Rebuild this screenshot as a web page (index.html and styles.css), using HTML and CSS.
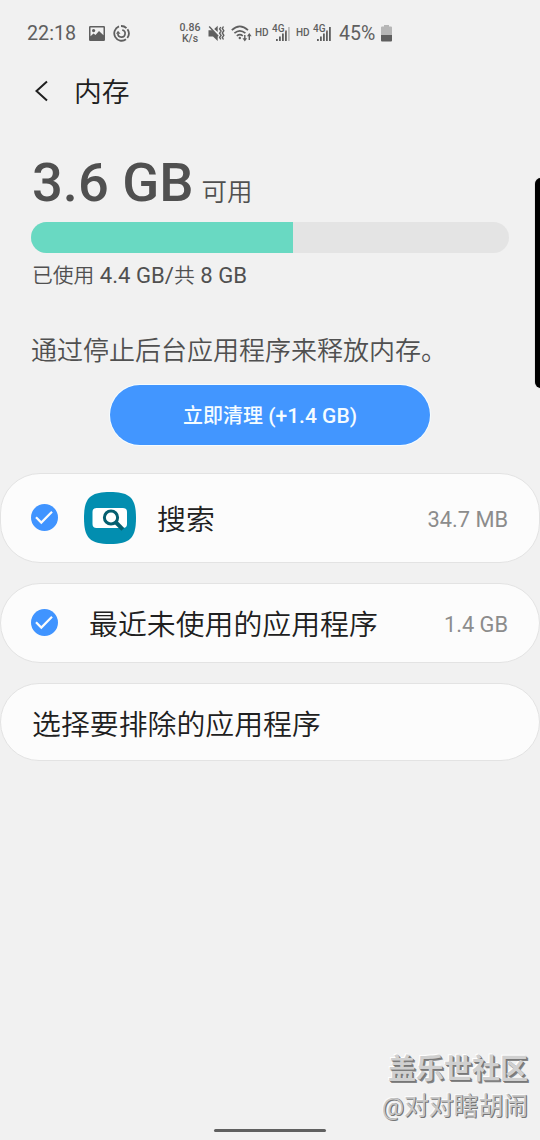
FILE: index.html
```html
<!DOCTYPE html>
<html lang="zh-CN">
<head>
<meta charset="utf-8">
<title>内存</title>
<link rel="stylesheet" href="styles.css">
</head>
<body>
<div class="screen">
  <div class="status">
    <span class="clock">22:18</span>
    <svg class="ic-photo" width="16" height="15" viewBox="0 0 16 15"><path fill="#5f5f5f" fill-rule="evenodd" d="M1.200 0h13.600Q16 0 16 1.200v12.600q0 1.200-1.200 1.200H1.200Q0 15 0 13.800V1.200Q0 0 1.200 0zM1.500 1.500v8.800l3-2.800 2 1.500 3.500-4 4.500 4.300V1.500z"/><circle cx="4.600" cy="4.600" r="1.600" fill="#5f5f5f"/></svg>
    <svg class="ic-swirl" width="17" height="17" viewBox="0 0 17 17" fill="none" stroke="#5f5f5f" stroke-width="1.800"><path d="M6 1.400A7.400 7.400 0 1 0 13 14.300M8 1A7.500 7.500 0 0 1 13.500 3.200M14.500 4.300A7.500 7.500 0 0 1 14.300 13"/><path d="M9.200 5a3.600 3.600 0 1 1-4.300 3.500" stroke-width="1.700"/><path d="M3 8.800l2-3 2.500 3z" fill="#5f5f5f" stroke="none"/></svg>
    <span class="speed"><span>0.86</span><span>K/s</span></span>
    <svg class="ic-mute" width="17" height="17" viewBox="0 0 17 17"><path fill="#5f5f5f" d="M.5 5.300h3.500l5.700 5.500V16l-4.700-4.500H.5zM6.200 4l3.500-3.200V7z"/><path d="M1.200 1.500l9 9.700M12.800 2l-1.200 2 1.500 2-1.500 2.200 1.500 2.200-1.500 2 1.200 2M15.500 1.500l-1.200 2 1.500 2.200-1.500 2.300 1.500 2.300-1.500 2.200 1.200 2" fill="none" stroke="#5f5f5f" stroke-width="1.400"/></svg>
    <svg class="ic-wifi" width="21" height="17" viewBox="0 0 21 17" fill="none" stroke="#5f5f5f" stroke-width="1.700"><path d="M.8 5.200Q8.800-2.400 17 5.200M3.400 8.200q5.400-4.700 11 0M5.800 10.800q3.100-2.400 6 0"/><circle cx="8.800" cy="13" r="1.200" fill="#5f5f5f" stroke="none"/><path d="M13.800 10v5M18.300 15v-5" stroke-width="1.400"/><path d="M11.500 13.300h4.600l-2.300 3.200zM16 11.200h4.600L18.300 8z" fill="#5f5f5f" stroke="none"/></svg>
    <span class="hd hd-a">HD</span>
    <span class="cell cell-a"><svg width="19" height="17" viewBox="0 0 19 17"><path fill="#5f5f5f" d="M4 14h1.800v2H4zM7 11.500h1.800V16H7zM10 8.500h1.800V16H10zM13 5.500h1.800V16H13z"/><path fill="#bcbcbc" d="M16 2h1.800v14H16z"/></svg><b>4G</b></span>
    <span class="hd hd-b">HD</span>
    <span class="cell cell-b"><svg width="19" height="17" viewBox="0 0 19 17"><path fill="#5f5f5f" d="M4 14h1.800v2H4zM7 11.500h1.800V16H7zM10 8.500h1.800V16H10zM13 5.500h1.800V16H13zM16 2h1.800v14H16z"/></svg><b>4G</b></span>
    <span class="percent">45%</span>
    <svg class="ic-battery" width="11" height="17" viewBox="0 0 11 17"><path fill="#b6b6b6" d="M3 0h5v1.500h2q1 0 1 1V10H0V2.500q0-1 1-1h2z"/><path fill="#5f5f5f" d="M0 10h11v5.500q0 1-1 1H1q-1 0-1-1z"/></svg>
  </div>

  <header class="title-bar">
    <svg class="back" width="14" height="22" viewBox="0 0 14 22"><path d="M13 1.500L2.500 11l10.500 9.500" fill="none" stroke="#202020" stroke-width="2"/></svg>
    <h1 class="title">内存</h1>
  </header>

  <section class="summary">
    <div class="free"><span class="amount">3.6 GB</span><span class="free-label">可用</span></div>
    <div class="bar"><div class="bar-used"></div></div>
    <div class="usage">已使用<span class="num"> 4.4 GB/</span>共<span class="num"> 8 GB</span></div>
    <p class="hint">通过停止后台应用程序来释放内存。</p>
  </section>
  <button class="clean">立即清理<span class="gain"> (+1.4 GB)</span></button>

  <div class="cards">
    <div class="card card-app">
      <svg class="check" width="28" height="28" viewBox="0 0 28 28"><circle cx="14.500" cy="13.500" r="13.500" fill="#4094ff"/><path d="M6 13.300l5.300 5.300L22 7.800" fill="none" stroke="#fcfcfc" stroke-width="2.200"/></svg>
      <svg class="app-icon" width="52" height="52" viewBox="0 0 52 52"><path fill="#028eb0" d="M26 0C46 0 52 6 52 26S46 52 26 52 0 46 0 26 6 0 26 0z"/><rect x="8.500" y="16" width="34.500" height="20" rx="4" fill="#fff"/><circle cx="27" cy="25.500" r="6.600" fill="none" stroke="#055f70" stroke-width="3"/><path d="M31.500 30l7.300 7.300" stroke="#055f70" stroke-width="4"/></svg>
      <span class="name">搜索</span><span class="size">34.7 MB</span>
    </div>
    <div class="card card-unused">
      <svg class="check" width="28" height="28" viewBox="0 0 28 28"><circle cx="14.500" cy="13.500" r="13.500" fill="#4094ff"/><path d="M6 13.300l5.300 5.300L22 7.800" fill="none" stroke="#fcfcfc" stroke-width="2.200"/></svg>
      <span class="name">最近未使用的应用程序</span><span class="size">1.4 GB</span>
    </div>
    <div class="card card-exclude"><span class="name">选择要排除的应用程序</span></div>
  </div>

  <footer class="foot">
    <div class="mark-site">盖乐世社区</div>
    <div class="mark-user">@对对瞎胡闹</div>
    <div class="home-pill"></div>
  </footer>
  <div class="edge-handle"></div>
</div>
</body>
</html>
```
FILE: styles.css
```css
* { box-sizing: border-box; }
body { margin: 0; background: #f1f1f1; font-family: Roboto, "Noto Sans CJK SC", sans-serif; color: #202020; }
svg { display: block; flex: none; }
.screen { position: relative; width: 540px; height: 1140px; overflow: hidden; display: flex; flex-direction: column; }
.status { height: 66px; padding-left: 27px; display: flex; align-items: center; color: #5f5f5f; flex: none; white-space: nowrap; }
.clock { width: 62px; font-size: 19.700px; line-height: 24px; padding-top: 1px; }
.ic-swirl { margin-left: 8px; }
.speed { width: 22px; margin-left: 49px; font-size: 10.500px; line-height: 10px; font-weight: 500; display: flex; flex-direction: column; align-items: center; gap: 1px; }
.ic-mute { margin-left: 7px; }
.ic-wifi { margin-left: 6px; }
.hd { width: 14px; font-size: 10px; line-height: 12px; font-weight: 500; }
.hd-a { margin-left: 3px; }
.hd-b { margin-left: 5px; }
.cell { position: relative; width: 19px; height: 17px; margin-left: 3px; }
.cell b { position: absolute; left: 0; top: -2px; font-size: 10px; line-height: 11px; font-weight: 500; text-shadow: 1px 1px 0 #f1f1f1; }
.percent { margin-left: 7px; width: 42px; font-size: 19.500px; line-height: 24px; padding-top: 1px; }
.title-bar { height: 50px; display: flex; align-items: center; padding-left: 34px; flex: none; }
.title { margin: 0 0 2px 26px; font-size: 27.800px; line-height: 40px; font-weight: 350; font-family: "Noto Sans CJK SC", sans-serif; }
.summary { padding: 35px 31px 0; color: #505050; }
.free { height: 71px; display: flex; align-items: baseline; line-height: 64px; white-space: nowrap; padding-left: 1px; }
.amount { font-size: 54.300px; font-weight: 500; }
.free-label { font-size: 25.500px; margin-left: 8px; font-weight: 350; }
.bar { height: 31px; border-radius: 16px; background: #e4e4e4; overflow: hidden; }
.bar-used { width: 262px; height: 31px; background: #69d9c2; }
.usage { height: 43px; font-size: 20.800px; line-height: 44px; padding-left: 1px; white-space: nowrap; font-weight: 350; }
.num { font-size: 22.100px; font-weight: 400; white-space: pre; }
.hint { margin: 36px 0 0; height: 38px; font-size: 26px; line-height: 38px; white-space: nowrap; font-weight: 350; }
.clean { width: 320px; height: 60px; margin: 15px auto 0; padding-bottom: 2px; border: 0; border-radius: 30px; background: #4296ff; color: #f5fcff; font: 500 20px Roboto, "Noto Sans CJK SC", sans-serif; box-shadow: 0 0 0 1px #f5fcff; flex: none; }
.gain { font-size: 21px; white-space: pre; }
.cards { margin-top: 28px; display: flex; flex-direction: column; gap: 20px; }
.card { display: flex; align-items: center; padding: 0 31px 0 29px; background: #fcfcfc; border: 1px solid #e3e3e3; border-radius: 40px; }
.card-app { height: 90px; }
.card-unused { height: 80px; }
.card-exclude { height: 78px; }
.app-icon { margin-left: 26px; }
.name { font-size: 28.900px; line-height: 42px; margin-left: 21px; padding-top: 4px; font-weight: 350; }
.card-unused .name { margin-left: 31px; padding-top: 4px; }
.card-exclude .name { margin-left: 2px; padding-top: 5px; }
.size { margin-left: auto; color: #8c8c8c; font-size: 21.800px; padding-top: 2px; }
.foot { margin-top: auto; height: 92px; padding-right: 12px; text-align: right; display: flex; flex-direction: column; }
.mark-site { font-size: 28px; line-height: 44px; font-weight: 700; color: #d0d0d0; text-shadow: 1px 1px 0 #777, 2px 2px 0 #858585, -1px -1px 0 #fff; }
.mark-user { font-size: 24.800px; line-height: 30px; color: #c8c8c8; text-shadow: 1px 1px 0 #777, 1px 0 0 #888, -1px -1px 0 #fafafa; }
.home-pill { width: 112px; height: 3px; border-radius: 2px; background: #606060; margin: 7px 0 0 214px; }
.edge-handle { position: absolute; left: 535px; top: 178px; width: 12px; height: 210px; border-radius: 6px; background: #000; box-shadow: 0 0 1px #777; }
```
